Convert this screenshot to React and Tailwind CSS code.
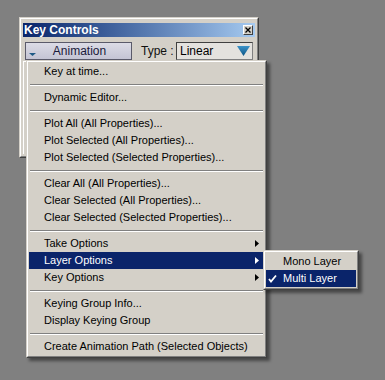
import React from 'react';

const Arrow = ({ active }) => (
  <svg width="4" height="7" viewBox="0 0 4 7" className="shrink-0">
    <path d="M0 0 L4 3.5 L0 7 Z" fill={active ? '#ffffff' : '#000000'} />
  </svg>
);

const Separator = () => (
  <div className="h-[9px] flex flex-col justify-center px-[1px]">
    <div className="h-px bg-[#808080]" />
    <div className="h-px bg-white" />
  </div>
);

function MenuItem({ label, sub, active }) {
  return (
    <div
      className={
        'h-[17px] flex items-center pl-[15px] pr-[5px] whitespace-nowrap ' +
        (active ? 'bg-[#0a246a] text-white' : 'text-black')
      }
    >
      <span className="flex-1">{label}</span>
      {sub && <Arrow active={active} />}
    </div>
  );
}

// classic raised popup frame
function Popup({ className, children }) {
  return (
    <div
      className={
        'border border-t-[#d4d0c8] border-l-[#d4d0c8] border-r-[#404040] border-b-[#404040] bg-[#d4d0c8] shadow-[3px_3px_3px_rgba(0,0,0,0.45)] ' +
        className
      }
    >
      <div className="border border-t-white border-l-white border-r-[#808080] border-b-[#808080] p-px">
        {children}
      </div>
    </div>
  );
}

function KeyControlsWindow() {
  return (
    <div className="w-[240px] h-[141px] bg-[#d4d0c8] border border-t-[#d4d0c8] border-l-[#d4d0c8] border-r-[#404040] border-b-[#404040]">
      <div className="h-full border border-t-white border-l-white border-r-[#808080] border-b-[#808080] px-[2px] pt-[4px]">
        <div className="h-[14px] flex items-center justify-between pl-[1px] pr-[2px] bg-linear-to-r from-[#0a246a] to-[#a6caf0]">
          <span className="text-white font-bold text-[12px] leading-none">Key Controls</span>
          <div className="w-[10px] h-[10px] bg-[#d4d0c8] border border-t-white border-l-white border-r-[#404040] border-b-[#404040] flex items-center justify-center">
            <svg width="6" height="6" viewBox="0 0 6 6">
              <path d="M0.5 0.5 L5.5 5.5 M5.5 0.5 L0.5 5.5" stroke="#000" strokeWidth="1.3" />
            </svg>
          </div>
        </div>

        <div className="mt-[5px] px-[2px] flex items-center h-[18px] text-[12px]">
          <div className="relative w-[107px] h-[18px] border border-[#5a5a6a] bg-linear-to-b from-[#dcdce6] to-[#c4c4d4] flex items-center justify-center text-[#1a1a3a]">
            <svg width="7" height="3" viewBox="0 0 7 3" className="absolute left-[3px] bottom-[3px]">
              <path d="M0 0 L7 0 L3.5 3 Z" fill="#1f5a86" />
            </svg>
            <span className="pl-[2px]">Animation</span>
          </div>
          <span className="ml-[9px] text-[#101010]">Type :</span>
          <div className="ml-auto w-[77px] h-[18px] border border-t-[#404040] border-l-[#404040] border-r-[#808080] border-b-[#808080] bg-[#e4e2de] flex items-center pl-[3px] pr-[2px]">
            <span className="flex-1 text-black">Linear</span>
            <svg width="13" height="10" viewBox="0 0 13 10">
              <defs>
                <linearGradient id="tri" x1="0" y1="0" x2="0" y2="1">
                  <stop offset="0" stopColor="#3d93c8" />
                  <stop offset="1" stopColor="#0b5585" />
                </linearGradient>
              </defs>
              <path d="M0 0 L13 0 L6.5 10 Z" fill="url(#tri)" />
            </svg>
          </div>
        </div>

        <div className="mt-px h-[93px] border-l border-t border-white" />
      </div>
    </div>
  );
}

export default function App() {
  return (
    <div className="relative w-[385px] h-[380px] overflow-hidden bg-[#808080] pl-[19px] pt-[17px] font-['Liberation_Sans',Arial,sans-serif] text-[11px] leading-none">
      <KeyControlsWindow />

      <Popup className="absolute left-[26px] top-[60px] w-[241px]">
        <MenuItem label="Key at time..." />
        <Separator />
        <MenuItem label="Dynamic Editor..." />
        <Separator />
        <MenuItem label="Plot All (All Properties)..." />
        <MenuItem label="Plot Selected (All Properties)..." />
        <MenuItem label="Plot Selected (Selected Properties)..." />
        <Separator />
        <MenuItem label="Clear All (All Properties)..." />
        <MenuItem label="Clear Selected (All Properties)..." />
        <MenuItem label="Clear Selected (Selected Properties)..." />
        <Separator />
        <MenuItem label="Take Options" sub />
        <MenuItem label="Layer Options" sub active />
        <MenuItem label="Key Options" sub />
        <Separator />
        <MenuItem label="Keying Group Info..." />
        <MenuItem label="Display Keying Group" />
        <Separator />
        <MenuItem label="Create Animation Path (Selected Objects)" />
      </Popup>

      <Popup className="absolute left-[263px] top-[250px] w-[96px]">
        <div className="h-[17px] flex items-center pl-[17px] text-black whitespace-nowrap">Mono Layer</div>
        <div className="h-[17px] flex items-center bg-[#0a246a] text-white whitespace-nowrap">
          <svg width="17" height="17" viewBox="0 0 17 17" className="shrink-0">
            <path d="M3 9 L5 11.5 L10 5.5" stroke="#fff" strokeWidth="1.8" fill="none" />
          </svg>
          <span>Multi Layer</span>
        </div>
      </Popup>
    </div>
  );
}
